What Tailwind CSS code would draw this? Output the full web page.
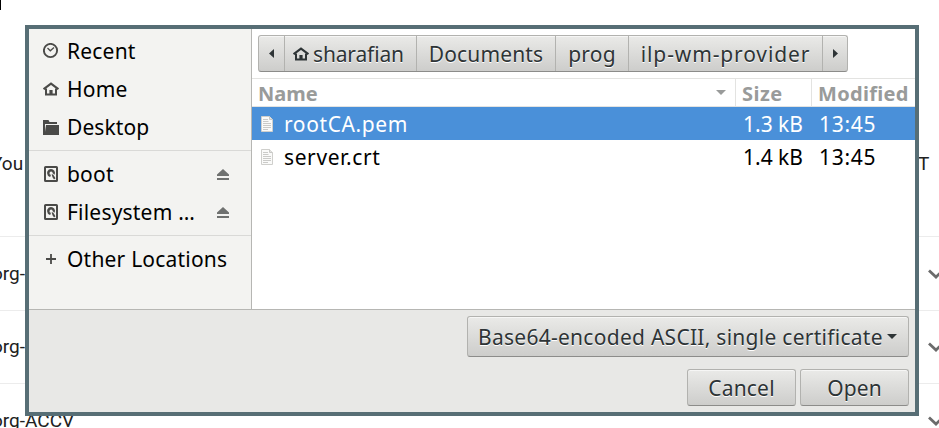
<!DOCTYPE html>
<html lang="en">
<head>
<meta charset="utf-8">
<title>Open file</title>
<script src="https://cdn.jsdelivr.net/npm/@tailwindcss/browser@4"></script>
</head>
<body class="w-[939px] h-[428px] overflow-hidden bg-white relative font-['Noto_Sans',sans-serif] text-[21px] leading-none text-black">

<svg class="hidden">
  <symbol id="house" viewBox="0 0 16 14"><path d="M.6 7.200 8 1.600l7.400 5.600" fill="none" stroke="currentColor" stroke-width="2.100"/><path d="M3 6.500V12.500h10V6.500" fill="none" stroke="currentColor" stroke-width="2"/><path d="M6.400 8h3.200v5H6.400z" fill="currentColor"/></symbol>
  <symbol id="disk" viewBox="0 0 14 16"><rect x="1" y="1" width="12" height="14" rx=".6" fill="none" stroke="currentColor" stroke-width="2"/><path d="M7 3a4 4 0 0 0-3.200 6.400c.6.800 1.500 1.300 2.400 1.500L7 8.800A1.600 1.600 0 1 1 8.700 7.200l1.900 1.500A4 4 0 0 0 7 3z" fill="currentColor"/><path d="M7.600 8.300 9.200 8.600l2.300 3.600-1.500 1.300-1.500-2.300z" fill="currentColor"/></symbol>
  <symbol id="eject" viewBox="0 0 12 11"><path d="M6 0 12 5.500V7H0V5.500zM0 9h12v2H0z" fill="currentColor"/></symbol>
  <symbol id="doc" viewBox="0 0 12 16"><path d="M.5.500h8l3 3v12H.5z" fill="#fafaf9" stroke="#cfcfcc"/><path d="M8.500.5v3h3" fill="#e4e4e2" stroke="#c9c9c6"/><path d="M2 3.500h5M2 5.500h5.500M2 7.500h8M2 9.500h8M2 11.500h8M2 13.500h5" stroke="#c4c4c2" stroke-width=".9"/></symbol>
  <symbol id="chev" viewBox="0 0 16 10"><path d="m1 1.500 7 6.500 7-6.500" fill="none" stroke="#6b6b6b" stroke-width="2.800"/></symbol>
</svg>

<!-- page behind the dialog -->
<div class="absolute inset-0 overflow-hidden font-[Roboto,sans-serif] text-[19px] text-[#212121]">
  <div class="h-[237px] border-b border-[#ececec] relative">
    <div class="absolute left-0 top-0 w-px h-[10px] bg-black"></div>
    <span class="absolute left-[-9px] top-[154px]">You</span>
    <span class="absolute left-[918px] top-[154px]">T</span>
  </div>
  <div class="h-[74px] border-b border-[#ececec] flex items-center justify-between"><span class="-ml-2">org-ACCV</span><svg class="w-4 h-[10px] shrink-0 -mr-[5px]"><use href="#chev"/></svg></div>
  <div class="h-[73px] border-b border-[#ececec] flex items-center justify-between"><span class="-ml-2 pb-[2px]">org-ACCV</span><svg class="w-4 h-[10px] shrink-0 -mr-[5px]"><use href="#chev"/></svg></div>
  <div class="h-[74px] flex items-center justify-between"><span class="-ml-2 pb-[2px]">org-ACCV</span><svg class="w-4 h-[10px] shrink-0 -mr-[5px]"><use href="#chev"/></svg></div>
</div>

<!-- dialog -->
<div class="absolute left-[25px] top-[25px] w-[894px] h-[391px] border-4 border-[#576e75] bg-[#e8e8e6] flex flex-col">
  <div class="h-[280px] flex">
    <aside class="w-[223px] shrink-0 bg-[#f3f3f1] border-r border-[#b6b6b3] pt-[3px] whitespace-nowrap">
      <div class="h-[38px] flex items-center pl-[14px]"><svg class="w-4 h-4 mr-2 text-[#4a4a48]" viewBox="0 0 16 16"><circle cx="7.500" cy="7.500" r="6.600" fill="none" stroke="currentColor" stroke-width="1.900"/><path d="M4.500 5 7.300 7.800 11 4.500" fill="none" stroke="currentColor" stroke-width="1.300"/></svg><span class="tracking-[0.2px]">Recent</span></div>
      <div class="h-[38px] flex items-center pl-[14px]"><svg class="w-4 h-[14px] mr-2 text-[#4a4a48]"><use href="#house"/></svg><span class="tracking-[0.2px]">Home</span></div>
      <div class="h-[38px] flex items-center pl-[14px]"><svg class="w-4 h-[15px] mr-2 text-[#4a4a48]" viewBox="0 0 16 15"><path d="M0 0h5.500l1 2H14v2H2v9.500h14V15H0z" fill="currentColor"/><path d="M3 5h13v10H1.500z" fill="currentColor"/></svg><span class="tracking-[0.1px]">Desktop</span></div>
      <div class="mt-[4px] border-t border-[#d9d9d7] pt-[4px]">
        <div class="h-[38px] flex items-center pl-[15px] pr-[22px]"><svg class="w-[14px] h-4 mr-[9px] text-[#4a4a48]"><use href="#disk"/></svg><span class="flex-1 tracking-[0.2px]">boot</span><svg class="w-3 h-[11px] text-[#6f7170]"><use href="#eject"/></svg></div>
        <div class="h-[38px] flex items-center pl-[15px] pr-[22px]"><svg class="w-[14px] h-4 mr-[9px] text-[#4a4a48]"><use href="#disk"/></svg><span class="flex-1 tracking-[0.2px]">Filesystem …</span><svg class="w-3 h-[11px] text-[#6f7170]"><use href="#eject"/></svg></div>
      </div>
      <div class="mt-[4px] border-t border-[#d9d9d7] pt-[4px]">
        <div class="h-[38px] flex items-center pl-[17px]"><svg class="w-[10px] h-[10px] mr-[11px] text-[#4a4a48]" viewBox="0 0 10 10"><path d="M5 0v10M0 5h10" stroke="currentColor" stroke-width="1.800"/></svg><span class="tracking-[0.2px]">Other Locations</span></div>
      </div>
    </aside>
    <main class="flex-1 min-w-0 bg-white whitespace-nowrap">
      <div class="h-[49px] pt-[6px] pl-[6px]">
        <div class="w-[590px] h-[37px] flex rounded-[3px] border border-[#b2b2af] border-b-[#8c8c8a] bg-linear-to-b from-[#eaeae8] to-[#cdcdcb] text-[#2e3436] [text-shadow:0_1px_white] shadow-[inset_0_1px_#f6f6f5]">
          <div class="w-[26px] border-r border-[#b2b2af] flex items-center justify-center pr-px"><svg class="w-[5px] h-[9px]" viewBox="0 0 5 9"><path d="M5 0v9L0 4.500z" fill="#2e3436"/></svg></div>
          <div class="w-[132px] border-r border-[#b2b2af] flex items-center pl-2"><svg class="w-4 h-[14px] mr-[4px]"><use href="#house"/></svg><span class="pt-[2px] tracking-[-0.15px]">sharafian</span></div>
          <div class="w-[139px] border-r border-[#b2b2af] flex items-center justify-center"><span class="pt-[2px] tracking-[0.15px]">Documents</span></div>
          <div class="w-[73px] border-r border-[#b2b2af] flex items-center justify-center"><span class="pt-[2px] tracking-[0.2px]">prog</span></div>
          <div class="w-[194px] border-r border-[#b2b2af] flex items-center justify-center"><span class="pt-[2px] tracking-[0.87px]">ilp-wm-provider</span></div>
          <div class="flex-1 flex items-center justify-center"><svg class="w-[5px] h-[9px]" viewBox="0 0 5 9"><path d="M0 0v9L5 4.500z" fill="#2e3436"/></svg></div>
        </div>
      </div>
      <div class="h-[29px] flex border-y border-[#e3e3e1] font-bold text-[#999b9a] text-[20px]">
        <div class="w-[484px] border-r border-[#e3e3e1] flex items-center justify-between pl-[6px] pr-[9px]"><span class="pt-[2px]">Name</span><svg class="w-[10px] h-[5px]" viewBox="0 0 10 5"><path d="M0 0h10L5 5z" fill="#999b9a"/></svg></div>
        <div class="w-[76px] border-r border-[#e3e3e1] flex items-center pl-[6px]"><span class="pt-[2px] tracking-[0.5px]">Size</span></div>
        <div class="flex-1 flex items-center pl-[6px]"><span class="pt-[2px] tracking-[0.3px]">Modified</span></div>
      </div>
      <div class="h-[33px] flex items-center bg-[#4a90d9] text-white">
        <div class="w-[484px] flex items-center pl-[9px]"><svg class="w-[12px] h-4 mr-[11px]"><use href="#doc"/></svg><span class="pt-[2px] tracking-[0.6px]">rootCA.pem</span></div>
        <div class="w-[76px] pl-[7px] pt-[2px]"><span>1.3 kB</span></div>
        <div class="pl-[7px] pt-[2px]"><span class="tracking-[0.7px]">13:45</span></div>
      </div>
      <div class="h-[33px] flex items-center">
        <div class="w-[484px] flex items-center pl-[9px]"><svg class="w-[12px] h-4 mr-[11px]"><use href="#doc"/></svg><span class="pt-[2px] tracking-[0.6px]">server.crt</span></div>
        <div class="w-[76px] pl-[7px] pt-[2px]"><span>1.4 kB</span></div>
        <div class="pl-[7px] pt-[2px]"><span class="tracking-[0.7px]">13:45</span></div>
      </div>
    </main>
  </div>
  <footer class="flex-1 border-t border-[#b6b6b3] pt-[6px] pr-[6px] flex flex-col items-end gap-3 text-[#2e3436] [text-shadow:0_1px_white] whitespace-nowrap">
    <div class="w-[442px] h-[41px] shrink-0 rounded-[3px] border border-[#b2b2af] border-b-[#8c8c8a] bg-linear-to-b from-[#eaeae8] to-[#cdcdcb] flex items-center justify-between pl-[10px] pr-[11px] shadow-[inset_0_1px_#f6f6f5]"><span class="pt-[2px] tracking-[0.27px]">Base64-encoded ASCII, single certificate</span><svg class="w-[10px] h-[5px]" viewBox="0 0 10 5"><path d="M0 0h10L5 5z" fill="#2e3436"/></svg></div>
    <div class="flex gap-1">
      <div class="w-[109px] h-[37px] rounded-[3px] border border-[#b2b2af] border-b-[#8c8c8a] bg-linear-to-b from-[#eaeae8] to-[#cdcdcb] flex items-center justify-center shadow-[inset_0_1px_#f6f6f5]"><span class="pt-[2px] tracking-[0.2px]">Cancel</span></div>
      <div class="w-[109px] h-[37px] rounded-[3px] border border-[#b2b2af] border-b-[#8c8c8a] bg-linear-to-b from-[#eaeae8] to-[#cdcdcb] flex items-center justify-center shadow-[inset_0_1px_#f6f6f5]"><span class="pt-[2px] tracking-[0.1px]">Open</span></div>
    </div>
  </footer>
</div>
</body>
</html>
